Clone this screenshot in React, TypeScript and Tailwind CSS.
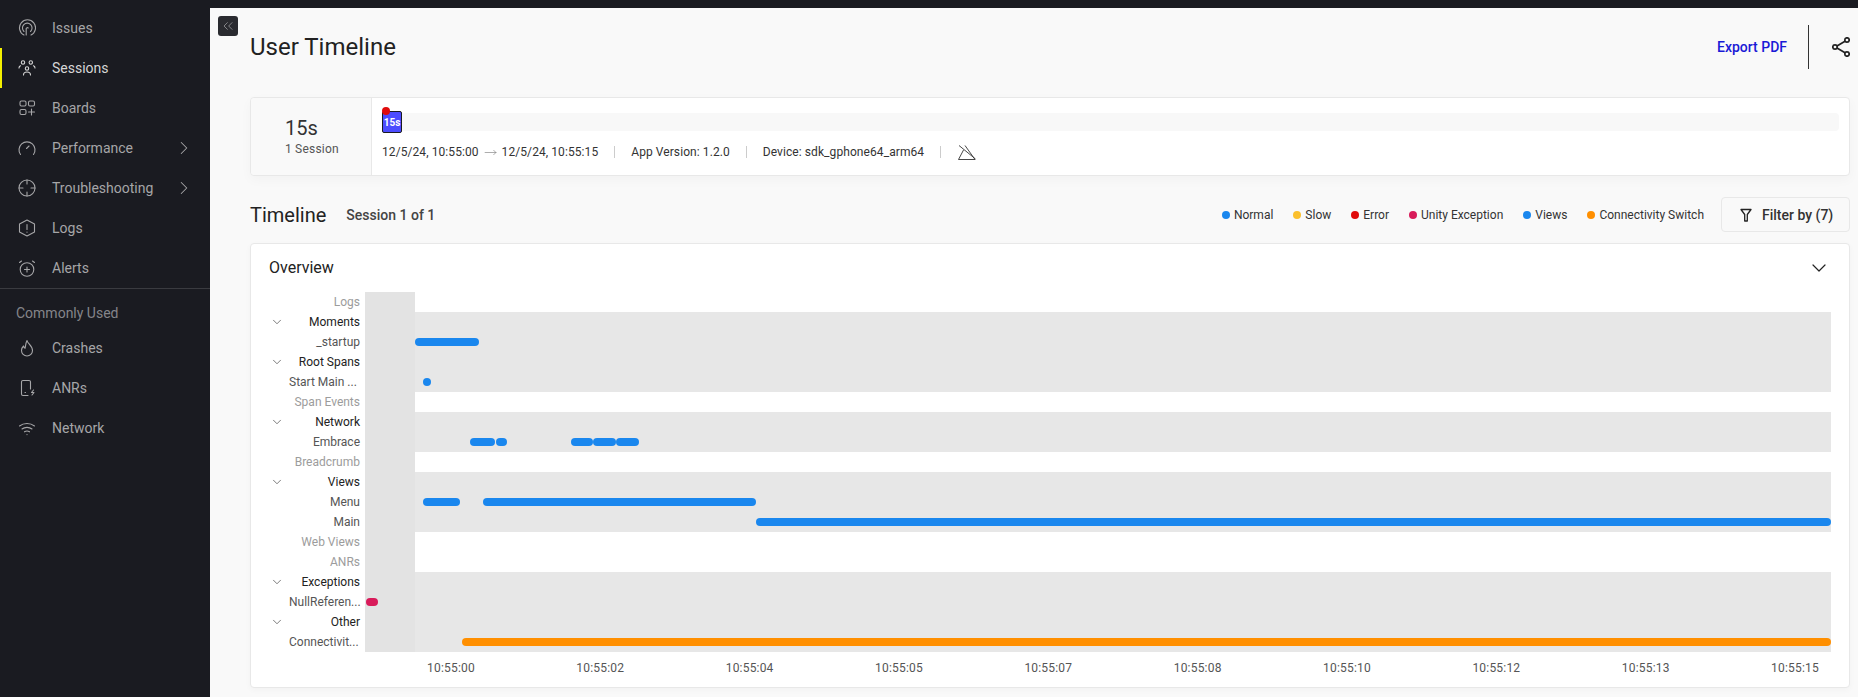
import type { ReactNode } from "react";
import { ChevronDown, ChevronRight, ChevronsLeft, MoveRight } from "lucide-react";

const Icon = ({ children }: { children: ReactNode }) => (
  <svg width="18" height="18" viewBox="0 0 18 18" fill="none" stroke="currentColor" strokeWidth="1.1" strokeLinecap="round" strokeLinejoin="round" className="shrink-0">
    {children}
  </svg>
);

const navIcons: Record<string, ReactNode> = {
  Issues: (
    <>
      <path d="M6 16A8 8 0 1 1 13 16" />
      <path d="M6 12.500A4.800 4.800 0 1 1 12.500 12.500" />
      <path d="M8.200 16V9.500A1.200 1.200 0 0 1 10.200 9" />
    </>
  ),
  Sessions: (
    <>
      <circle cx="5" cy="3.500" r="1.700" />
      <circle cx="12.800" cy="3.500" r="1.700" />
      <circle cx="9" cy="9.500" r="1.700" />
      <path d="M1 9c0-1 .6-1.800 1.500-2.200M17 9c0-1-.6-1.800-1.500-2.200M5.500 16c0-1.800 1.500-3 3.500-3s3.500 1.200 3.500 3" />
    </>
  ),
  Boards: (
    <>
      <rect x="2" y="2" width="6" height="5" rx="1.400" />
      <rect x="10.500" y="2" width="6" height="5" rx="1.400" />
      <rect x="2" y="10.500" width="6" height="5" rx="1.400" />
      <path d="M13.500 10v6M10.500 13h6" />
    </>
  ),
  Performance: (
    <>
      <path d="M2.500 15.500A8 8 0 1 1 15.500 15.500" />
      <path d="M8.500 9.500l2.500-2.500" />
    </>
  ),
  Troubleshooting: (
    <>
      <circle cx="9" cy="9" r="8" />
      <path d="M9 1v4M9 13v4M1 9h4M13 9h4" />
    </>
  ),
  Logs: (
    <>
      <path d="M9 1l7.500 4v8L9 17l-7.500-4V5z" />
      <path d="M9 5.500v5M9 13v.2" />
    </>
  ),
  Alerts: (
    <>
      <circle cx="9" cy="10.500" r="6.800" />
      <path d="M9 8v5M6.500 10.500h5M1.500 3.500L3.500 2M16.500 3.500L14.500 2" />
    </>
  ),
  Crashes: <path d="M9 1.500c.5 3 5.500 5.500 5.500 10a5.500 5.500 0 0 1-11 0c0-2 1-3.500 2-4.500.3 1.200.8 2 1.600 2.300C7.500 6.500 7.800 3.500 9 1.500z" />,
  ANRs: (
    <>
      <path d="M12.500 10V3a1.500 1.500 0 0 0-1.500-1.500H5A1.500 1.500 0 0 0 3.500 3v12A1.500 1.500 0 0 0 5 16.500h5" />
      <path d="M7 13.500h.5M15.500 11l-2 2.500h2.500l-2 2.500" />
    </>
  ),
  Network: (
    <>
      <path d="M1.500 7c4.200-3.300 10.800-3.300 15 0M4 10c2.800-2.200 7.200-2.200 10 0M6.500 12.800c1.500-1 3.500-1 5 0" />
      <path d="M9 15.500v.1" />
    </>
  ),
};

function NavRow({ label, active, arrow }: { label: string; active?: boolean; arrow?: boolean }) {
  return (
    <div className={`flex h-10 items-center border-l-2 pl-4 ${active ? "border-[#f4f000] text-[#d6d6d6]" : "border-transparent text-[#a6a6a8]"}`}>
      <Icon>{navIcons[label]}</Icon>
      <span className="ml-[16px] flex-1 text-sm">{label}</span>
      {arrow && <ChevronRight size={22} strokeWidth={1.1} className="mr-[15px]" />}
    </div>
  );
}

function Sidebar() {
  return (
    <aside className="flex w-[210px] shrink-0 flex-col bg-[#1a1b21] pt-2">
      <NavRow label="Issues" />
      <NavRow label="Sessions" active />
      <NavRow label="Boards" />
      <NavRow label="Performance" arrow />
      <NavRow label="Troubleshooting" arrow />
      <NavRow label="Logs" />
      <NavRow label="Alerts" />
      <div className="border-b border-[#3a3b40]" />
      <div className="flex h-[39px] items-end pb-[5px] pl-4 text-sm text-[#85858a]">Commonly Used</div>
      <NavRow label="Crashes" />
      <NavRow label="ANRs" />
      <NavRow label="Network" />
    </aside>
  );
}

const legend = [
  { name: "Normal", color: "bg-[#1a87ee]" },
  { name: "Slow", color: "bg-[#fbc02d]" },
  { name: "Error", color: "bg-[#e00b0b]" },
  { name: "Unity Exception", color: "bg-[#d81b5a]" },
  { name: "Views", color: "bg-[#1a87ee]" },
  { name: "Connectivity Switch", color: "bg-[#ff8f00]" },
];

type Row = {
  label: string;
  kind: "group" | "item" | "empty";
  filled?: boolean;
  bars?: { from: number; to: number; color?: string }[];
};

const BLUE = "bg-[#1a87ee]";

// from / to are page x positions of the spans, chart starts at 365
const rows: Row[] = [
  { label: "Logs", kind: "empty" },
  { label: "Moments", kind: "group", filled: true },
  { label: "_startup", kind: "item", filled: true, bars: [{ from: 415, to: 479 }] },
  { label: "Root Spans", kind: "group", filled: true },
  { label: "Start Main ...", kind: "item", filled: true, bars: [{ from: 423, to: 431 }] },
  { label: "Span Events", kind: "empty" },
  { label: "Network", kind: "group", filled: true },
  {
    label: "Embrace",
    kind: "item",
    filled: true,
    bars: [
      { from: 470, to: 495 },
      { from: 496, to: 507 },
      { from: 571, to: 593 },
      { from: 593, to: 616 },
      { from: 616, to: 639 },
    ],
  },
  { label: "Breadcrumb", kind: "empty" },
  { label: "Views", kind: "group", filled: true },
  {
    label: "Menu",
    kind: "item",
    filled: true,
    bars: [
      { from: 423, to: 460 },
      { from: 483, to: 756 },
    ],
  },
  { label: "Main", kind: "item", filled: true, bars: [{ from: 756, to: 1831 }] },
  { label: "Web Views", kind: "empty" },
  { label: "ANRs", kind: "empty" },
  { label: "Exceptions", kind: "group", filled: true },
  { label: "NullReferen...", kind: "item", filled: true, bars: [{ from: 366, to: 378, color: "bg-[#d81b5a]" }] },
  { label: "Other", kind: "group", filled: true },
  { label: "Connectivit...", kind: "item", filled: true, bars: [{ from: 462, to: 1831, color: "bg-[#ff8f00]" }] },
];

const ticks = ["10:55:00", "10:55:02", "10:55:04", "10:55:05", "10:55:07", "10:55:08", "10:55:10", "10:55:12", "10:55:13", "10:55:15"];

function ChartRow({ row }: { row: Row }) {
  const color = row.kind === "group" ? "text-[#222222]" : row.kind === "item" ? "text-[#555555]" : "text-[#9c9c9c]";
  const clipped = row.label.endsWith("...");
  return (
    <div className="flex h-5">
      <div className={`flex w-[114px] shrink-0 items-center pr-[5px] text-xs ${color}`}>
        {row.kind === "group" && <ChevronDown size={14} strokeWidth={1.2} className="ml-[19px] text-[#444444]" />}
        <span className={`ml-auto ${clipped ? "w-[71px] whitespace-nowrap" : ""}`}>{row.label}</span>
      </div>
      <div className="flex flex-1">
        <div className="w-[50px] shrink-0 bg-[#e3e3e3]" />
        <div className={`flex-1 ${row.filled ? "bg-[#e7e7e7]" : "bg-white"}`} />
      </div>
      <div className="relative w-0">
        {row.bars?.map((b) => (
          <div
            key={b.from}
            className={`absolute top-[6px] h-2 rounded-full ${b.color ?? BLUE}`}
            style={{ left: b.from - 1831, width: b.to - b.from }}
          />
        ))}
      </div>
    </div>
  );
}

export default function App() {
  return (
    <div className="relative flex h-[697px] overflow-hidden bg-[#f9f9f9] font-[Roboto,sans-serif]">
      <Sidebar />

      <button className="absolute left-[218px] top-4 flex h-5 w-5 items-center justify-center rounded-[3px] bg-[#2a2b30] text-[#b0b0b4]">
        <ChevronsLeft size={16} strokeWidth={1} />
      </button>

      <main className="flex min-w-0 flex-1 flex-col border-t-8 border-[#1a1b21] pl-10 pr-2">
        {/* Header */}
        <div className="mt-[17px] flex h-11 items-center">
          <h1 className="flex-1 text-2xl text-[#222222]">User Timeline</h1>
          <span className="text-sm font-medium text-[#1a1ad6]">Export PDF</span>
          <div className="ml-[21px] h-11 w-px bg-[#333333]" />
          <svg width="18" height="20" viewBox="0 0 18 20" fill="none" stroke="#222222" strokeWidth="1.7" className="ml-[23px]">
            <circle cx="15" cy="3" r="2.200" />
            <circle cx="3" cy="10" r="2.200" />
            <circle cx="15" cy="17" r="2.200" />
            <path d="M5 8.900l8-4.700M5 11.100l8 4.700" />
          </svg>
        </div>

        {/* Summary card */}
        <div className="mt-7 flex h-[79px] rounded border border-[#e8e8e8] bg-white shadow-[0_4px_12px_rgba(0,0,0,0.03)]">
          <div className="flex w-[121px] shrink-0 flex-col justify-center rounded-l border-r border-[#e8e8e8] bg-[#f9f9f9] pl-[34px]">
            <div className="text-xl leading-6 text-[#333333]">15s</div>
            <div className="text-xs leading-[18px] tracking-[0.2px] text-[#555555]">1 Session</div>
          </div>
          <div className="flex flex-1 flex-col pl-[10px] pr-[10px]">
            <div className="relative mt-[15px] h-[18px] rounded-sm bg-[#f8f8f8]">
              <div className="absolute -top-[2px] left-0 flex h-[22px] w-5 items-center justify-center rounded-[2px] border border-[#1a1b21] bg-[#4c4cff] text-[10px] font-bold text-white">15s</div>
              <div className="absolute -top-[6px] left-0 h-2 w-2 rounded-full bg-[#e00b0b]" />
            </div>
            <div className="mt-[13px] flex h-4 items-center text-xs tracking-[0.08px] text-[#333333]">
              <span>12/5/24, 10:55:00</span>
              <MoveRight size={13} strokeWidth={1} className="mx-[5px] text-[#666666]" />
              <span>12/5/24, 10:55:15</span>
              <div className="ml-4 h-3 w-px bg-[#cccccc]" />
              <span className="ml-4">App Version: 1.2.0</span>
              <div className="ml-4 h-3 w-px bg-[#cccccc]" />
              <span className="ml-4">Device: sdk_gphone64_arm64</span>
              <div className="ml-4 h-3 w-px bg-[#cccccc]" />
              <svg width="18" height="15" viewBox="0 0 18 15" fill="none" stroke="#333333" strokeWidth="0.9" strokeLinejoin="round" className="ml-[17px]">
                <path d="M5.500 5L.5 14.500H17L7 .5" />
                <path d="M1 .5L17.500 14" />
              </svg>
            </div>
          </div>
        </div>

        {/* Timeline heading + legend */}
        <div className="mt-[21px] flex h-[35px] items-center">
          <h2 className="text-xl text-[#222222]">Timeline</h2>
          <span className="ml-5 flex-1 text-sm font-medium text-[#444444]">Session 1 of 1</span>
          <div className="flex items-center gap-5 text-xs text-[#333333]">
            {legend.map((l) => (
              <div key={l.name} className="flex items-center gap-1">
                <span className={`h-2 w-2 rounded-full ${l.color}`} />
                {l.name}
              </div>
            ))}
          </div>
          <div className="ml-[17px] flex h-[35px] w-[129px] items-center rounded border border-[#e8e8e8] pl-[18px] text-sm font-medium text-[#333333]">
            <svg width="12" height="14" viewBox="0 0 12 14" fill="none" stroke="#222222" strokeWidth="1.300" strokeLinejoin="round">
              <path d="M1 1.500h10L7.300 6.500V13H4.700V6.500z" />
            </svg>
            <span className="ml-[10px]">Filter by (7)</span>
          </div>
        </div>

        {/* Overview card */}
        <div className="mt-[11px] h-[445px] rounded border border-[#e8e8e8] bg-white shadow-[0_2px_6px_rgba(0,0,0,0.03)]">
          <div className="flex h-[48px] items-center justify-between pl-[18px] pr-[18px]">
            <span className="text-base text-[#222222]">Overview</span>
            <ChevronDown size={24} strokeWidth={1.200} className="text-[#222222]" />
          </div>
          <div className="pr-[18px]">
            {rows.map((row) => (
              <ChartRow key={row.label} row={row} />
            ))}
            <div className="mt-[4px] flex h-6 items-center justify-between pl-[176px] pr-[12px] text-xs tracking-[0.2px] text-[#555555]">
              {ticks.map((t) => (
                <span key={t}>{t}</span>
              ))}
            </div>
          </div>
        </div>
      </main>
    </div>
  );
}
